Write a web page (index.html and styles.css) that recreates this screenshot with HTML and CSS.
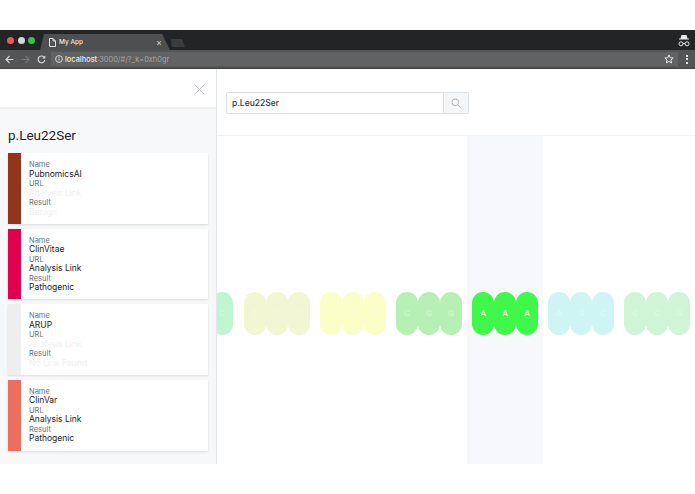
FILE: index.html
```html
<!DOCTYPE html>
<html lang="en">
<head>
<meta charset="utf-8">
<title>My App</title>
<link rel="stylesheet" href="styles.css">
</head>
<body>
<div class="browser">
  <div class="tabbar">
    <div class="lights"><span class="light red"></span><span class="light grey"></span><span class="light green"></span></div>
    <div class="tab">
      <svg class="doc" width="7" height="9" viewBox="0 0 7 9"><path d="M.5.500h3.500l2.500 2.500v5.500h-6zM4 .5v2.500h2.500" fill="none" stroke="#e4e4e4" stroke-width="1"/></svg>
      <span class="tab-title">My App</span>
      <span class="tab-close">×</span>
    </div>
    <div class="newtab"></div>
    <svg class="incognito" width="12" height="12" viewBox="0 0 12 12"><path d="M3.500 0h5l1 3.500h1.500v1h-10v-1h1.500z" fill="#e8e8e8"/><circle cx="3" cy="8.800" r="2" fill="none" stroke="#e8e8e8"/><circle cx="9" cy="8.800" r="2" fill="none" stroke="#e8e8e8"/><path d="M5 8.500h2" stroke="#e8e8e8"/></svg>
  </div>
  <div class="toolbar">
    <svg class="nav" width="9" height="9" viewBox="0 0 9 9"><path d="M8.500 4.500h-7M4.500 1l-3.500 3.500 3.500 3.500" fill="none" stroke="#d8d8d8" stroke-width="1.100"/></svg>
    <svg class="nav" width="9" height="9" viewBox="0 0 9 9"><path d="M.5 4.500h7M4.500 1l3.500 3.500-3.500 3.500" fill="none" stroke="#777" stroke-width="1.100"/></svg>
    <svg class="nav" width="9" height="9" viewBox="0 0 9 9"><path d="M7.800 5.200a3.400 3.400 0 1 1-.8-3.100" fill="none" stroke="#e0e0e0" stroke-width="1.100"/><path d="M8.300.6v2.900h-2.900z" fill="#e0e0e0"/></svg>
    <div class="omnibox">
      <svg class="info" width="8" height="8" viewBox="0 0 9 9"><circle cx="4.500" cy="4.500" r="3.800" fill="none" stroke="#e0e0e0"/><path d="M4.500 4v2.500M4.500 2.300v1" stroke="#e0e0e0"/></svg>
      <span class="url"><span class="host">localhost</span>:3000/#/?_k=0xh0gr</span>
      <svg class="star" width="10" height="10" viewBox="0 0 10 10"><path d="M5 .9l1.200 2.800 3 .3-2.300 2 .7 3-2.600-1.600-2.600 1.600.7-3-2.300-2 3-.3z" fill="none" stroke="#e8e8e8"/></svg>
    </div>
    <div class="menu"><span></span><span></span><span></span></div>
  </div>
</div>

<div class="app">
  <aside class="sidebar">
    <div class="side-head">
      <svg width="11" height="11" viewBox="0 0 11 11"><path d="M.5.500l10 10M10.500.500l-10 10" stroke="#c4c8cc" stroke-width="1"/></svg>
    </div>
    <div class="side-body">
      <h1 class="variant">p.Leu22Ser</h1>
      <div class="cards">
        <article class="card">
          <div class="swatch brown"></div>
          <dl class="fields">
            <dt>Name</dt><dd>PubnomicsAI</dd>
            <dt>URL</dt><dd class="faint">Analysis Link</dd>
            <dt>Result</dt><dd class="faint">Benign</dd>
          </dl>
        </article>
        <article class="card">
          <div class="swatch crimson"></div>
          <dl class="fields">
            <dt>Name</dt><dd>ClinVitae</dd>
            <dt>URL</dt><dd>Analysis Link</dd>
            <dt>Result</dt><dd>Pathogenic</dd>
          </dl>
        </article>
        <article class="card">
          <div class="swatch pale"></div>
          <dl class="fields">
            <dt>Name</dt><dd>ARUP</dd>
            <dt>URL</dt><dd class="faint">Analysis Link</dd>
            <dt>Result</dt><dd class="faint">No Link Found</dd>
          </dl>
        </article>
        <article class="card">
          <div class="swatch coral"></div>
          <dl class="fields">
            <dt>Name</dt><dd>ClinVar</dd>
            <dt>URL</dt><dd>Analysis Link</dd>
            <dt>Result</dt><dd>Pathogenic</dd>
          </dl>
        </article>
      </div>
    </div>
  </aside>
  <main class="main">
    <div class="search-row">
      <div class="search">
        <div class="search-input">p.Leu22Ser</div>
        <button class="search-btn" type="button" aria-label="Search">
          <svg width="10" height="10" viewBox="0 0 11 11"><circle cx="4.700" cy="4.700" r="3.700" fill="none" stroke="#a9adb2"/><path d="M7.500 7.500l3 3" stroke="#a9adb2"/></svg>
        </button>
      </div>
    </div>
    <div class="track">
      <div class="codon partial c-mint"><b>C</b></div>
      <div class="codon c-olive"><b>T</b><b>T</b><b>T</b></div>
      <div class="codon c-lemon"><b>T</b><b>A</b><b>T</b></div>
      <div class="codon c-green"><b>C</b><b>G</b><b>G</b></div>
      <div class="codon c-vivid active"><b>A</b><b>A</b><b>A</b></div>
      <div class="codon c-aqua"><b>A</b><b>G</b><b>C</b></div>
      <div class="codon c-sage"><b>G</b><b>C</b><b>G</b></div>
    </div>
  </main>
</div>
</body>
</html>
```
FILE: styles.css
```css
* { box-sizing: border-box; }
html, body { margin: 0; height: 100%; background: #fff; }
body {
  font-family: Inter, "Liberation Sans", sans-serif;
  padding-top: 30px;
  overflow: hidden;
}
.browser { height: 39px; }
.tabbar {
  height: 20px;
  background: #232425;
  display: flex;
  align-items: flex-end;
  padding-left: 7px;
  padding-right: 5px;
}
.lights { display: flex; gap: 3.500px; align-self: center; width: 33px; flex: none; }
.light { width: 7px; height: 7px; border-radius: 50%; }
.red { background: #ee5a5c; }
.grey { background: #d6d6d6; }
.green { background: #37c24a; }
.tab {
  width: 130px;
  height: 16px;
  background: #4e4f50;
  clip-path: polygon(4px 0, 122px 0, 130px 100%, 0 100%);
  display: flex;
  align-items: center;
  padding: 0 8px 0 9px;
  color: #e8e8e8;
  font-size: 6.500px;
}
.doc { margin-right: 3px; flex: none; }
.tab-title { flex: 1; font-weight: 500; }
.tab-close { font-size: 9px; color: #cfcfcf; }
.newtab {
  width: 16px;
  height: 8px;
  margin: 0 0 3px -1px;
  background: #3b3c3d;
  clip-path: polygon(2px 0, 13px 0, 16px 100%, 3px 100%);
}
.incognito { margin: 0 0 3px auto; }
.toolbar {
  height: 19px;
  background: #545556;
  border-bottom: 1px solid #3d3d3d;
  display: flex;
  align-items: center;
  padding: 0 6px 0 5px;
  gap: 7px;
}
.omnibox {
  flex: 1;
  height: 14px;
  background: #616263;
  display: flex;
  align-items: center;
  padding: 0 4px;
  margin-left: -2px;
  font-size: 7.400px;
  color: #a4a4a4;
}
.info { margin-right: 2px; }
.url { flex: 1; }
.host { color: #ececec; font-weight: 500; }
.menu { display: flex; flex-direction: column; gap: 1.500px; margin-left: 1px; width: 3px; }
.menu span { width: 2px; height: 2px; background: #e0e0e0; }

.app { display: flex; height: 395px; }
.sidebar {
  width: 217px;
  flex: none;
  border-right: 1px solid #e3e6e8;
  display: flex;
  flex-direction: column;
}
.side-head {
  height: 40px;
  flex: none;
  border-bottom: 2px solid #eceef0;
  display: flex;
  align-items: center;
  justify-content: flex-end;
  padding: 2px 11px 0 0;
}
.side-body { flex: 1; background: #f7f8fa; padding: 0 8px; }
.variant {
  margin: 18px 0 9px;
  font-family: Roboto, sans-serif;
  font-size: 13.500px;
  line-height: 17px;
  font-weight: 400;
  color: #1f2328;
}
.cards { display: flex; flex-direction: column; gap: 5px; width: 200px; }
.card {
  display: flex;
  height: 70.670px;
  background: #fff;
  box-shadow: 0 1px 2px rgba(16, 22, 26, .12);
}
.swatch { width: 13px; flex: none; }
.brown { background: #95341c; }
.crimson { background: #e0004d; }
.pale { background: #eeeeee; }
.coral { background: #ee6e5d; }
.fields { margin: 0; padding: 7px 0 0 8px; font-size: 8.500px; line-height: 9.500px; }
.fields dt { color: #6b7075; font-size: 7.500px; }
.fields dd { margin: 0; color: #1c2024; }
.fields dd.faint { color: #eff0f1; }

.main { flex: 1; min-width: 0; display: flex; flex-direction: column; }
.search-row {
  height: 67px;
  flex: none;
  border-bottom: 1px solid #eff1f2;
  padding: 23px 0 0 9px;
}
.search { display: flex; width: 243px; height: 22px; }
.search-input {
  flex: 1;
  border: 1px solid #dfe2e5;
  border-radius: 2px 0 0 2px;
  padding-left: 5px;
  font-size: 8.500px;
  font-weight: 500;
  line-height: 20px;
  color: #30353a;
}
.search-btn {
  width: 25px;
  border: 1px solid #dfe2e5;
  border-left: 0;
  border-radius: 0 2px 2px 0;
  background: #f5f6f7;
  padding: 0;
  display: flex;
  align-items: center;
  justify-content: center;
}
.track { flex: 1; display: flex; overflow: hidden; }
.codon {
  flex: none;
  width: 76px;
  padding: 156px 5px 0;
  display: flex;
  align-items: flex-start;
}
.codon.partial { width: 28px; margin-left: -6px; padding-left: 0; padding-right: 6px; }
.codon b {
  width: 22px;
  height: 43px;
  border-radius: 11px;
  background: var(--pill);
  color: var(--ink);
  font-size: 8px;
  font-weight: 500;
  line-height: 43px;
  text-align: center;
}
.c-mint { --pill: #bff5cf; --ink: #d6f8e0; }
.c-olive { --pill: #f3f6d2; --ink: #f7f9e2; }
.c-lemon { --pill: #f9ffc7; --ink: #fbffdc; }
.c-green { --pill: #b6f0b4; --ink: #d4f6d3; }
.c-vivid { --pill: #3ff84a; --ink: #e5fce6; }
.c-aqua { --pill: #cef4f3; --ink: #dff8f7; }
.c-sage { --pill: #cff4d6; --ink: #e0f8e4; }
.active { background: #f7f8fb; }
```
